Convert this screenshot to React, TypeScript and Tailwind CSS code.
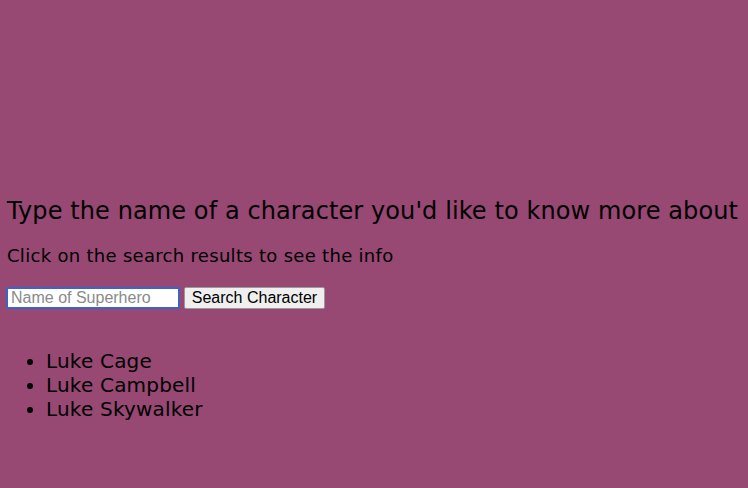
export default function App() {
  const results = ['Luke Cage', 'Luke Campbell', 'Luke Skywalker']

  return (
    <div className="min-h-screen w-full bg-[#974873] pl-[7px] pt-[196px] font-['DejaVu_Sans',sans-serif] text-black">
      <h2 className="text-[24px] leading-[30px] tracking-[0.1px]">Type the name of a character you'd like to know more about</h2>
      <p className="mt-[19px] text-[18px] leading-[22px] tracking-[0.3px]">Click on the search results to see the info</p>
      <div className="mt-[20px] flex items-center gap-[4px]">
        <input
          autoFocus
          placeholder="Name of Superhero"
          className="ml-[-1px] h-[22px] w-[174px] rounded-[2px] border-2 border-[#3b63c9] bg-white px-[3px] py-0 font-['Liberation_Sans',sans-serif] text-[16px] leading-none text-black outline-none placeholder:text-[#8a8a8a]"
        />
        <button className="h-[22px] w-[141px] rounded-[2px] border border-[#9a9a9a] bg-[#efefef] font-['Liberation_Sans',sans-serif] text-[16px] leading-none text-black">
          Search Character
        </button>
      </div>
      <ul className="mt-[40px] list-disc pl-[39px] text-[20px] leading-[24px] tracking-[0.2px]">
        {results.map((name) => (
          <li key={name}>{name}</li>
        ))}
      </ul>
    </div>
  )
}
